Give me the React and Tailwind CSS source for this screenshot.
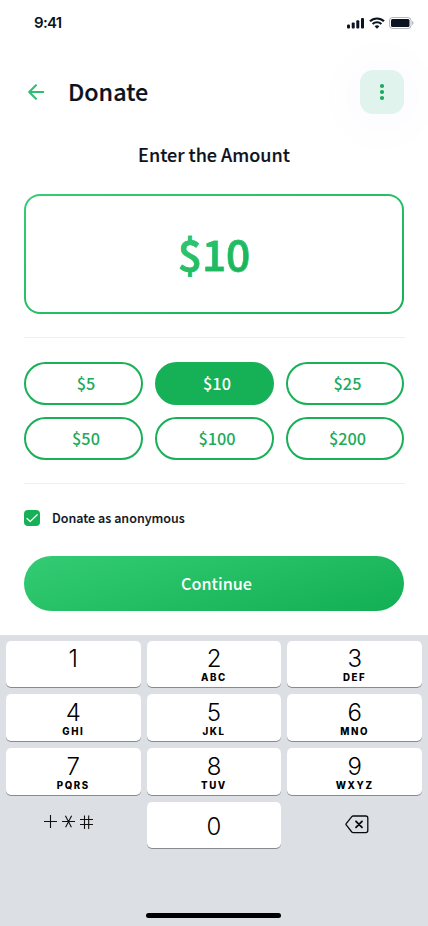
import React from "react";

const amounts = ["$5", "$10", "$25", "$50", "$100", "$200"];
const keys = [
  ["1", ""], ["2", "ABC"], ["3", "DEF"],
  ["4", "GHI"], ["5", "JKL"], ["6", "MNO"],
  ["7", "PQRS"], ["8", "TUV"], ["9", "WXYZ"],
];

function StatusBar() {
  return (
    <div className="flex h-11 items-center justify-between pl-[34px] pr-[14px]">
      <span className="font-['Inter',sans-serif] text-[15px] font-semibold leading-none tracking-[-0.7px] text-[#0d1220]">9:41</span>
      <div className="flex h-3 items-center pt-[2px]">
        <svg width="18" height="12" viewBox="0 0 18 12" fill="#0b1220">
          <rect x="0" y="7.5" width="3" height="4" rx="1" />
          <rect x="4.7" y="5.5" width="3" height="6" rx="1" />
          <rect x="9.3" y="3.3" width="3" height="8.2" rx="1" />
          <rect x="14" y="1" width="3" height="10.5" rx="1" />
        </svg>
        <svg className="ml-[4px]" width="16" height="12" viewBox="0 0 16 12" fill="none" stroke="#0b1220" strokeWidth="2.1">
          <path d="M1 4.3a10 10 0 0 1 14 0" />
          <path d="M3.6 7.1a6.3 6.3 0 0 1 8.8 0" />
          <path d="M5.6 9.3a3.5 3.5 0 0 1 4.8 0L8 11.8z" fill="#0b1220" stroke="none" />
        </svg>
        <svg className="ml-[4px]" width="25" height="12" viewBox="0 0 25 12">
          <rect x="0.5" y="0.5" width="21.5" height="11" rx="3" fill="none" stroke="#0b1220" strokeOpacity="0.3" />
          <rect x="2" y="2" width="18.5" height="8" rx="1.5" fill="#0b1220" />
          <path d="M23.3 4v4c1.5-.7 1.5-3.3 0-4z" fill="#0b1220" fillOpacity="0.4" />
        </svg>
      </div>
    </div>
  );
}

function Key({ digit, letters }) {
  const top = digit === "0" ? "mt-[12px]" : digit > "3" ? "mt-[6px]" : "mt-[5px]";
  return (
    <button className="flex h-full flex-col items-center rounded-[5px] bg-white font-['Inter',sans-serif] text-black shadow-[0_1px_0_#898a8d]">
      <span className={`text-[24px] font-light leading-[26px] ${top}`}>{digit}</span>
      {letters && <span className="text-[9.7px] font-extrabold leading-[12px] tracking-[1.6px]">{letters}</span>}
    </button>
  );
}

export default function App() {
  return (
    <div className="flex h-[926px] w-[428px] flex-col overflow-hidden bg-white font-['Noto_Sans_CJK_SC',sans-serif] text-[#0d1220]">
      <StatusBar />
      <main className="flex flex-col px-6">
        <header className="mt-[26px] flex h-11 items-center">
          <svg className="ml-1" width="17" height="16" viewBox="0 0 17 16" fill="none" stroke="#2fbd70" strokeWidth="2" strokeLinecap="round" strokeLinejoin="round">
            <path d="M15.3 8H1.2M8 1.2 1.2 8 8 14.8" />
          </svg>
          <h1 className="ml-[23px] whitespace-nowrap pb-[2px] text-[23.3px] font-medium leading-[36px] [-webkit-text-stroke:0.2px_#0d1220]">Donate</h1>
          <button className="ml-auto flex size-11 items-center justify-center rounded-[13px] bg-[#e1f3ed] shadow-[0_4px_60px_rgba(80,80,230,0.05)]">
            <svg width="6" height="18" viewBox="0 0 6 18" fill="#19aa5b">
              <circle cx="3" cy="3" r="2.1" /><circle cx="3" cy="9" r="2.1" /><circle cx="3" cy="15" r="2.1" />
            </svg>
          </button>
        </header>
        <h2 className="mt-[26px] whitespace-nowrap text-center text-[18px] font-medium leading-[28px] [-webkit-text-stroke:0.15px_#0d1220]">Enter the Amount</h2>
        <div className="mt-[26px] h-[120px] rounded-2xl bg-linear-to-br from-[#36cc76] to-[#13af54] p-[2px]">
          <div className="flex h-full items-center justify-center rounded-[14px] bg-white">
            <span className="-mt-[3px] bg-linear-to-br from-[#33cc74] to-[#13af54] bg-clip-text text-[42.5px] font-medium leading-[60px] text-transparent [-webkit-text-stroke:0.5px_#22bd64]">$10</span>
          </div>
        </div>
        <div className="-mr-px mt-[23px] h-px bg-[#f0f0f1]" />
        <div className="mt-6 grid grid-cols-[119px_119px_118px] gap-3">
          {amounts.map((a) => (
            <button key={a} className={`flex h-[43px] items-center justify-center rounded-full border-2 border-[#19b058] pl-[5px] text-[16.3px] font-medium leading-none ${a === "$10" ? "bg-[#16b156] text-white" : "bg-white text-[#20aa5b]"}`}>{a}</button>
          ))}
        </div>
        <div className="-mr-px mt-[23px] h-px bg-[#f0f0f1]" />
        <label className="mt-[26px] flex h-4 items-center">
          <svg width="16" height="16" viewBox="0 0 16 16">
            <rect width="16" height="16" rx="4" fill="#16b156" />
            <path d="m3 8.5 3.2 3L13.2 4.7" fill="none" stroke="white" strokeWidth="1.2" strokeLinecap="round" strokeLinejoin="round" />
          </svg>
          <span className="ml-3 whitespace-nowrap text-[12.5px] font-medium leading-4 tracking-[0.03px] [-webkit-text-stroke:0.15px_#0d1220]">Donate as anonymous</span>
        </label>
        <button className="mt-[30px] flex h-[55px] items-center justify-center rounded-full bg-linear-[165deg] from-[#33cc74] to-[#13af54] pl-[5px] text-[16.2px] font-medium leading-none text-white">Continue</button>
      </main>
      <section className="mt-6 flex flex-1 flex-col bg-[#dcdfe4] px-[6px] pt-[6px]">
        <div className="grid grid-cols-3 grid-rows-[46px_47px_47px_46px] gap-x-[6px] gap-y-[7px]">
          {keys.map(([d, l]) => <Key key={d} digit={d} letters={l} />)}
          <div className="flex items-start pl-[38px] pt-[12px]">
            <svg width="50" height="17" viewBox="0 0 50 17" fill="none" stroke="#111" strokeWidth="1.1">
              <path d="M0 7.5h13M6.5 1v13M18 7.5h13M21.4 1.8l6 11.4M27.6 1.8l-6 11.4M36 5.5h13M36 10.5h13M40.5 1.5v13.5M44.7 1.5v13.5" />
            </svg>
          </div>
          <Key digit="0" letters="" />
          <div className="flex items-start justify-center pl-[5px] pt-[13px]">
            <svg width="24" height="19" viewBox="0 0 24 19" fill="none" stroke="#080b0e" strokeWidth="1.3" strokeLinecap="round" strokeLinejoin="round">
              <path d="M8.2 1h12.6a2 2 0 0 1 2 2v12.6a2 2 0 0 1-2 2H8.2a2 2 0 0 1-1.4-.6L1.2 9.9a.9.9 0 0 1 0-1.2L6.8 1.6A2 2 0 0 1 8.2 1Z" />
              <path d="m11 6.3 6 6m0-6-6 6" strokeWidth="1.8" />
            </svg>
          </div>
        </div>
        <div className="mb-2 mr-[2px] mt-auto h-[5px] w-[135px] self-center rounded-full bg-black" />
      </section>
    </div>
  );
}
